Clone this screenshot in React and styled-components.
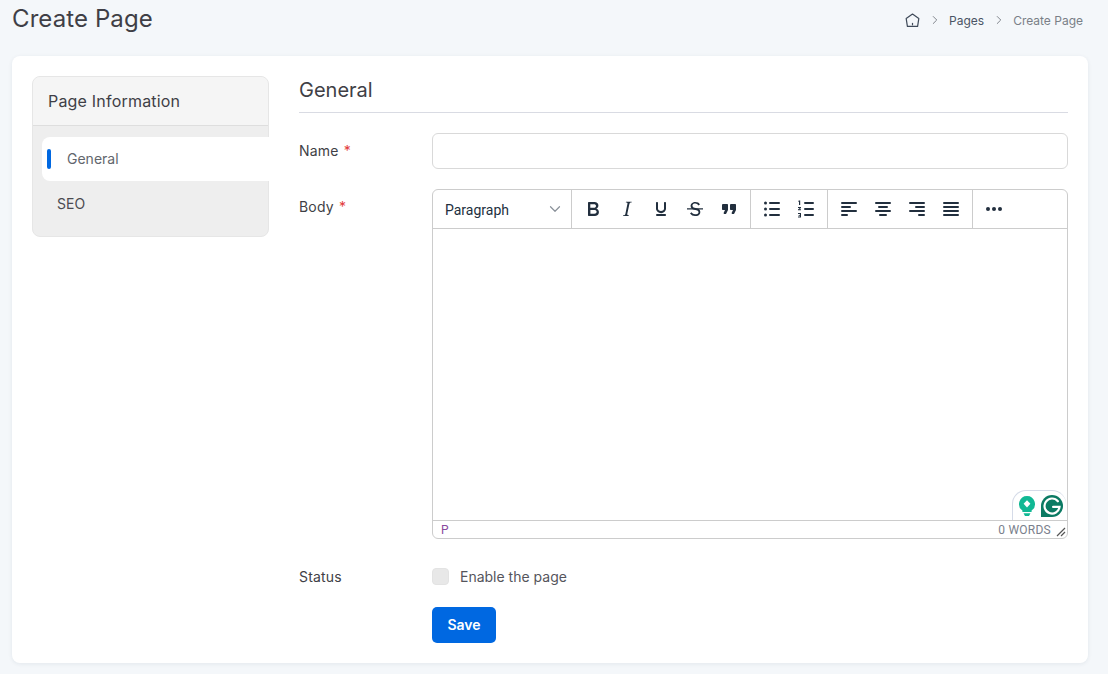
import styled, { createGlobalStyle } from 'styled-components';
import { ChevronRight, ChevronDown } from 'lucide-react';

const GlobalStyle = createGlobalStyle`
    * { box-sizing: border-box; }
    html, body { margin: 0; background: #f4f7fa; }
    body { font-family: Inter, "Liberation Sans", sans-serif; color: #3f3f46; }
`;

const Icon = ({ children }) => (
    <svg width="24" height="24" viewBox="0 0 24 24" fill="#222f3e">{children}</svg>
);

const HomeIcon = () => (
    <svg width="15" height="15" viewBox="0 0 15 15" fill="none" stroke="#3f4a59" strokeWidth="1.2" strokeLinejoin="round" strokeLinecap="round">
        <path d="M7.5 1L13.8 5.6 12.6 13.4H2.4L1.2 5.6z" />
        <path d="M7.5 10.4v1.4" />
    </svg>
);

const BoldIcon = () => <Icon><path d="M7.8 19c-.3 0-.5 0-.6-.2l-.2-.5V5.7c0-.2 0-.4.2-.5l.6-.2h5c1.5 0 2.7.3 3.5 1 .7.6 1.1 1.4 1.1 2.5a3 3 0 0 1-.6 1.9c-.4.6-1 1-1.6 1.2.4.1.9.3 1.3.6s.8.7 1 1.2c.3.4.4 1 .4 1.6 0 1.3-.4 2.3-1.3 3-.8.7-2 1-3.7 1H7.8zm5-8.3c.6 0 1.2-.1 1.6-.5.4-.3.6-.7.6-1.3 0-1.1-.8-1.7-2.3-1.7H9.3v3.5h3.4zm.5 6c.7 0 1.3-.1 1.7-.4.4-.4.6-.9.6-1.5s-.2-1-.7-1.4c-.4-.3-1-.4-2-.4H9.4v3.8h4z" /></Icon>;
const ItalicIcon = () => <Icon><path d="M16.7 4.7l-.1.9h-.3c-.6 0-1 0-1.4.3-.3.3-.4.6-.5 1.1l-2.1 9.8v.6c0 .5.4.8 1.4.8h.2l-.2.8H8l.2-.8h.2c1.1 0 1.8-.5 2-1.5l2-9.8.1-.5c0-.6-.4-.8-1.4-.8h-.3l.2-.9h5.8z" /></Icon>;
const UnderlineIcon = () => <Icon><path d="M16 5c.6 0 1 .4 1 1v5.5a4 4 0 0 1-.4 1.8l-1 1.4a5.3 5.3 0 0 1-5.5 1 5 5 0 0 1-1.6-1c-.5-.4-.8-.9-1.1-1.4a4 4 0 0 1-.4-1.8V6c0-.6.4-1 1-1s1 .4 1 1v5.5c0 .3 0 .6.2 1l.6.7a3.3 3.3 0 0 0 2.2.8 3.4 3.4 0 0 0 2.2-.8c.3-.2.4-.5.6-.8l.2-.9V6c0-.6.4-1 1-1zM8 17h8c.6 0 1 .4 1 1s-.4 1-1 1H8a1 1 0 0 1 0-2z" /></Icon>;
const StrikeIcon = () => <Icon><path d="M15.6 8.5c-.5-.7-1-1.1-1.3-1.3-.6-.4-1.3-.6-2-.6-2.7 0-2.8 1.7-2.8 2.1 0 1.6 1.8 2 3.2 2.3 4.4.9 4.6 2.8 4.6 3.9 0 1.4-.7 4.1-5 4.1A6.2 6.2 0 0 1 7 16.4l1.5-1.1c.4.6 1.6 2 3.7 2 1.6 0 2.5-.4 3-1 .3-.4.3-.7.3-1 0-.5 0-1.6-3.1-2.2C9.2 12.6 7.6 11.5 7.6 9c0-1.6 1.2-4.1 4.7-4.1 1.1 0 2 .2 2.8.7.7.5 1.3 1 1.8 1.9l-1.3 1z" /><path d="M4 11.2h16v1.4H4z" /></Icon>;
const QuoteIcon = () => <Icon><path d="M7.5 17h.9c.4 0 .7-.2.9-.6L11 13V8c0-.6-.4-1-1-1H6a1 1 0 0 0-1 1v4c0 .6.4 1 1 1h2l-1.3 2.7a1 1 0 0 0 .8 1.3zm8 0h.9c.4 0 .7-.2.9-.6L19 13V8c0-.6-.4-1-1-1h-4a1 1 0 0 0-1 1v4c0 .6.4 1 1 1h2l-1.3 2.7a1 1 0 0 0 .8 1.3z" /></Icon>;
const BulletIcon = () => (
    <Icon>
        <circle cx="5.5" cy="6" r="1.5" /><circle cx="5.5" cy="12" r="1.5" /><circle cx="5.5" cy="18" r="1.5" />
        <rect x="9" y="5" width="11" height="2" rx="1" /><rect x="9" y="11" width="11" height="2" rx="1" /><rect x="9" y="17" width="11" height="2" rx="1" />
    </Icon>
);
const NumberIcon = () => (
    <Icon>
        <rect x="10" y="5" width="10" height="2" rx="1" /><rect x="10" y="11" width="10" height="2" rx="1" /><rect x="10" y="17" width="10" height="2" rx="1" />
        <path d="M5 3.5h1.2V8H5V4.6l-.8.2V3.9zM4 10h3v.9l-1.6 1.4H7v1H4v-.9l1.7-1.5H4zM4 16h3v4.4H4v-.9h1.9V19H4.6v-.8h1.3v-1.3H4z" />
    </Icon>
);
const AlignIcon = ({ lines }) => (
    <Icon>
        {lines.map(([x, width], i) => <rect key={i} x={x} y={5 + i * 4} width={width} height="2" rx="1" />)}
    </Icon>
);
const MoreIcon = () => <Icon><circle cx="6" cy="12" r="2" /><circle cx="12" cy="12" r="2" /><circle cx="18" cy="12" r="2" /></Icon>;

const Page = styled.div`
    width: 1108px;
    height: 674px;
    overflow: hidden;
    padding: 0 20px 11px 12px;
`;

const TopBar = styled.header`
    height: 56px;
    display: flex;
    justify-content: space-between;
    align-items: flex-start;
`;

const Title = styled.h1`
    margin: 4px 0 0;
    font-size: 24px;
    line-height: 30px;
    font-weight: 400;
    letter-spacing: 0.1px;
    color: #3f3f46;
`;

const Crumbs = styled.nav`
    display: flex;
    align-items: center;
    height: 20px;
    margin-top: 10px;
    padding-right: 5px;
    font-size: 12px;

    svg { display: block; }
`;

const Crumb = styled.span`
    color: ${(props) => (props.$current ? '#7a7f87' : '#4a5565')};
`;

const Sep = styled(ChevronRight)`
    margin: 0 7px 0 8px;
    color: #71767e;
`;

const Card = styled.main`
    height: 607px;
    padding: 20px;
    display: grid;
    grid-template-columns: 237px 1fr;
    gap: 30px;
    background: #fff;
    border-radius: 8px;
    box-shadow: 0 1px 4px rgba(30, 50, 80, 0.08);
`;

const Side = styled.aside`
    align-self: start;
    height: 161px;
    border: 1px solid #e6e6e6;
    border-radius: 8px;
    background: #eeeeee;
`;

const SideHead = styled.div`
    height: 49px;
    padding-left: 15px;
    display: flex;
    align-items: center;
    background: #f5f5f5;
    border-bottom: 1px solid #dedede;
    border-radius: 7px 7px 0 0;
    font-size: 16px;
    letter-spacing: 0.2px;
    color: #3f3f46;
`;

const SideNav = styled.div`
    padding: 11px 0 0 9px;
`;

const SideItem = styled.div`
    position: relative;
    height: 44px;
    margin-right: -1px;
    padding: ${(props) => (props.$active ? '0 0 1px 25px' : '0 0 0 15px')};
    display: flex;
    align-items: center;
    font-size: 14px;
    color: ${(props) => (props.$active ? '#62666d' : '#4a4a50')};
    background: ${(props) => (props.$active ? '#fff' : 'transparent')};
    border-radius: 8px 0 0 8px;

    ${(props) => props.$active && `
        &::before {
            content: '';
            position: absolute;
            left: 5px;
            top: 12px;
            width: 4px;
            height: 20px;
            border-radius: 2px;
            background: #0068e1;
        }
    `}
`;

const Content = styled.section`
    display: flex;
    flex-direction: column;
    gap: 20px;
`;

const SectionTitle = styled.h2`
    margin: 0;
    height: 37px;
    border-bottom: 1px solid #d9dbe3;
    font-size: 20px;
    line-height: 28px;
    font-weight: 400;
    color: #3f3f46;
`;

const Row = styled.div`
    display: grid;
    grid-template-columns: 133px 1fr;
`;

const Label = styled.label`
    padding-top: 8px;
    font-size: 14px;
    line-height: 20px;
    letter-spacing: 0.2px;
    color: #3f3f46;

    i {
        margin-left: 5px;
        font-style: normal;
        color: #e23b3b;
    }
`;

const TextInput = styled.input`
    height: 36px;
    width: 100%;
    border: 1px solid #d9d9d9;
    border-radius: 6px;
    background: #fff;
    outline: none;
`;

const Editor = styled.div`
    position: relative;
    height: 350px;
    display: flex;
    flex-direction: column;
    border: 1px solid #cccccc;
    border-radius: 6px;
    overflow: hidden;
`;

const Toolbar = styled.div`
    height: 39px;
    flex: none;
    display: flex;
    border-bottom: 1px solid #cccccc;
`;

const FormatSelect = styled.div`
    width: 139px;
    padding: 2px 7px 0 12px;
    display: flex;
    align-items: center;
    justify-content: space-between;
    border-right: 1px solid #cccccc;
    font-family: Roboto, sans-serif;
    font-size: 14px;
    color: #222f3e;

    svg { color: #8a919a; margin-top: -3px; }
`;

const ToolGroup = styled.div`
    padding: 0 4px;
    display: flex;
    border-right: 1px solid ${(props) => (props.$last ? 'transparent' : '#cccccc')};
`;

const ToolButton = styled.button`
    width: 34px;
    height: 38px;
    padding: 0;
    border: 0;
    background: none;
    display: flex;
    align-items: center;
    justify-content: center;
`;

const EditArea = styled.div`
    flex: 1;
    background: #fff;
`;

const StatusBar = styled.div`
    height: 18px;
    flex: none;
    padding: 0 16px 0 8px;
    display: flex;
    align-items: center;
    justify-content: space-between;
    border-top: 1px solid #cccccc;
    font-family: Roboto, sans-serif;
    font-size: 12px;
    letter-spacing: 0.25px;
    color: #7a808c;
`;

const PathTag = styled.span`
    color: #8a4a9e;
`;

const Resize = styled.svg`
    position: absolute;
    right: 1px;
    bottom: 1px;
`;

const Grammarly = styled.div`
    position: absolute;
    right: 1px;
    bottom: 18px;
    width: 54px;
    height: 30px;
    display: flex;
    align-items: center;
    justify-content: space-between;
    padding: 0 3px 0 5px;
    background: #fff;
    border: 1px solid #d5dbe8;
    border-bottom: 0;
    border-right: 0;
    border-radius: 14px 14px 0 0;
`;

const StatusRow = styled(Row)`
    height: 28px;
    padding-top: 9px;
`;

const StatusLabel = styled(Label)`
    padding-top: 0;
    margin-top: -1px;
`;

const CheckWrap = styled.div`
    display: flex;
    align-items: center;
    gap: 11px;
    height: 17px;
    font-size: 14px;
    color: #55555c;
`;

const CheckBox = styled.span`
    width: 17px;
    height: 17px;
    border-radius: 4px;
    background: #e8e8e8;
    border: 1px solid #e3e3e3;
`;

const SaveRow = styled.div`
    padding-left: 133px;
`;

const SaveButton = styled.button`
    width: 64px;
    height: 36px;
    padding: 0 0 2px;
    border: 0;
    border-radius: 5px;
    background: #0068e1;
    color: #fff;
    font-family: inherit;
    font-size: 14px;
    font-weight: 600;
`;

const App = () => (
    <>
        <GlobalStyle />
        <Page>
            <TopBar>
                <Title>Create Page</Title>
                <Crumbs>
                    <HomeIcon />
                    <Sep size={14} strokeWidth={1.5} />
                    <Crumb>Pages</Crumb>
                    <Sep size={14} strokeWidth={1.5} />
                    <Crumb $current>Create Page</Crumb>
                </Crumbs>
            </TopBar>
            <Card>
                <Side>
                    <SideHead>Page Information</SideHead>
                    <SideNav>
                        <SideItem $active>General</SideItem>
                        <SideItem>SEO</SideItem>
                    </SideNav>
                </Side>
                <Content>
                    <SectionTitle>General</SectionTitle>
                    <Row>
                        <Label>Name<i>*</i></Label>
                        <TextInput />
                    </Row>
                    <Row>
                        <Label>Body<i>*</i></Label>
                        <Editor>
                            <Toolbar>
                                <FormatSelect>Paragraph<ChevronDown size={18} strokeWidth={1.6} /></FormatSelect>
                                <ToolGroup>
                                    <ToolButton><BoldIcon /></ToolButton>
                                    <ToolButton><ItalicIcon /></ToolButton>
                                    <ToolButton><UnderlineIcon /></ToolButton>
                                    <ToolButton><StrikeIcon /></ToolButton>
                                    <ToolButton><QuoteIcon /></ToolButton>
                                </ToolGroup>
                                <ToolGroup>
                                    <ToolButton><BulletIcon /></ToolButton>
                                    <ToolButton><NumberIcon /></ToolButton>
                                </ToolGroup>
                                <ToolGroup>
                                    <ToolButton><AlignIcon lines={[[4, 16], [4, 10], [4, 16], [4, 7]]} /></ToolButton>
                                    <ToolButton><AlignIcon lines={[[4, 16], [7, 10], [4, 16], [8, 8]]} /></ToolButton>
                                    <ToolButton><AlignIcon lines={[[4, 16], [10, 10], [4, 16], [13, 7]]} /></ToolButton>
                                    <ToolButton><AlignIcon lines={[[4, 16], [4, 16], [4, 16], [4, 16]]} /></ToolButton>
                                </ToolGroup>
                                <ToolGroup $last>
                                    <ToolButton><MoreIcon /></ToolButton>
                                </ToolGroup>
                            </Toolbar>
                            <EditArea />
                            <StatusBar>
                                <PathTag>P</PathTag>
                                <span>0 WORDS</span>
                            </StatusBar>
                            <Grammarly>
                                <svg width="18" height="20" viewBox="0 0 18 20">
                                    <path d="M9 0a8 8 0 0 1 4.6 14.5V16H4.4v-1.5A8 8 0 0 1 9 0z" fill="#11b894" />
                                    <path d="M5.5 17.3h7L11 20H7z" fill="#11b894" />
                                    <path d="M9 4.2l3.4 3.6L9 11.4 5.6 7.8z" fill="#fff" />
                                </svg>
                                <svg width="22" height="22" viewBox="0 0 24 24">
                                    <path d="M12 0a12 12 0 0 1 12 12 12 12 0 0 1-12 12H0V12A12 12 0 0 1 12 0z" fill="#0b7a63" />
                                    <path d="M18.4 6.8A8.2 8.2 0 1 0 20.2 13h-7" fill="none" stroke="#fff" strokeWidth="2.4" strokeLinecap="round" />
                                </svg>
                            </Grammarly>
                            <Resize width="10" height="10" viewBox="0 0 10 10">
                                <path d="M9 1L1 9M9 5L5 9" stroke="#555" strokeWidth="1.2" />
                            </Resize>
                        </Editor>
                    </Row>
                    <StatusRow>
                        <StatusLabel>Status</StatusLabel>
                        <CheckWrap>
                            <CheckBox />
                            Enable the page
                        </CheckWrap>
                    </StatusRow>
                    <SaveRow>
                        <SaveButton>Save</SaveButton>
                    </SaveRow>
                </Content>
            </Card>
        </Page>
    </>
);

export default App;
